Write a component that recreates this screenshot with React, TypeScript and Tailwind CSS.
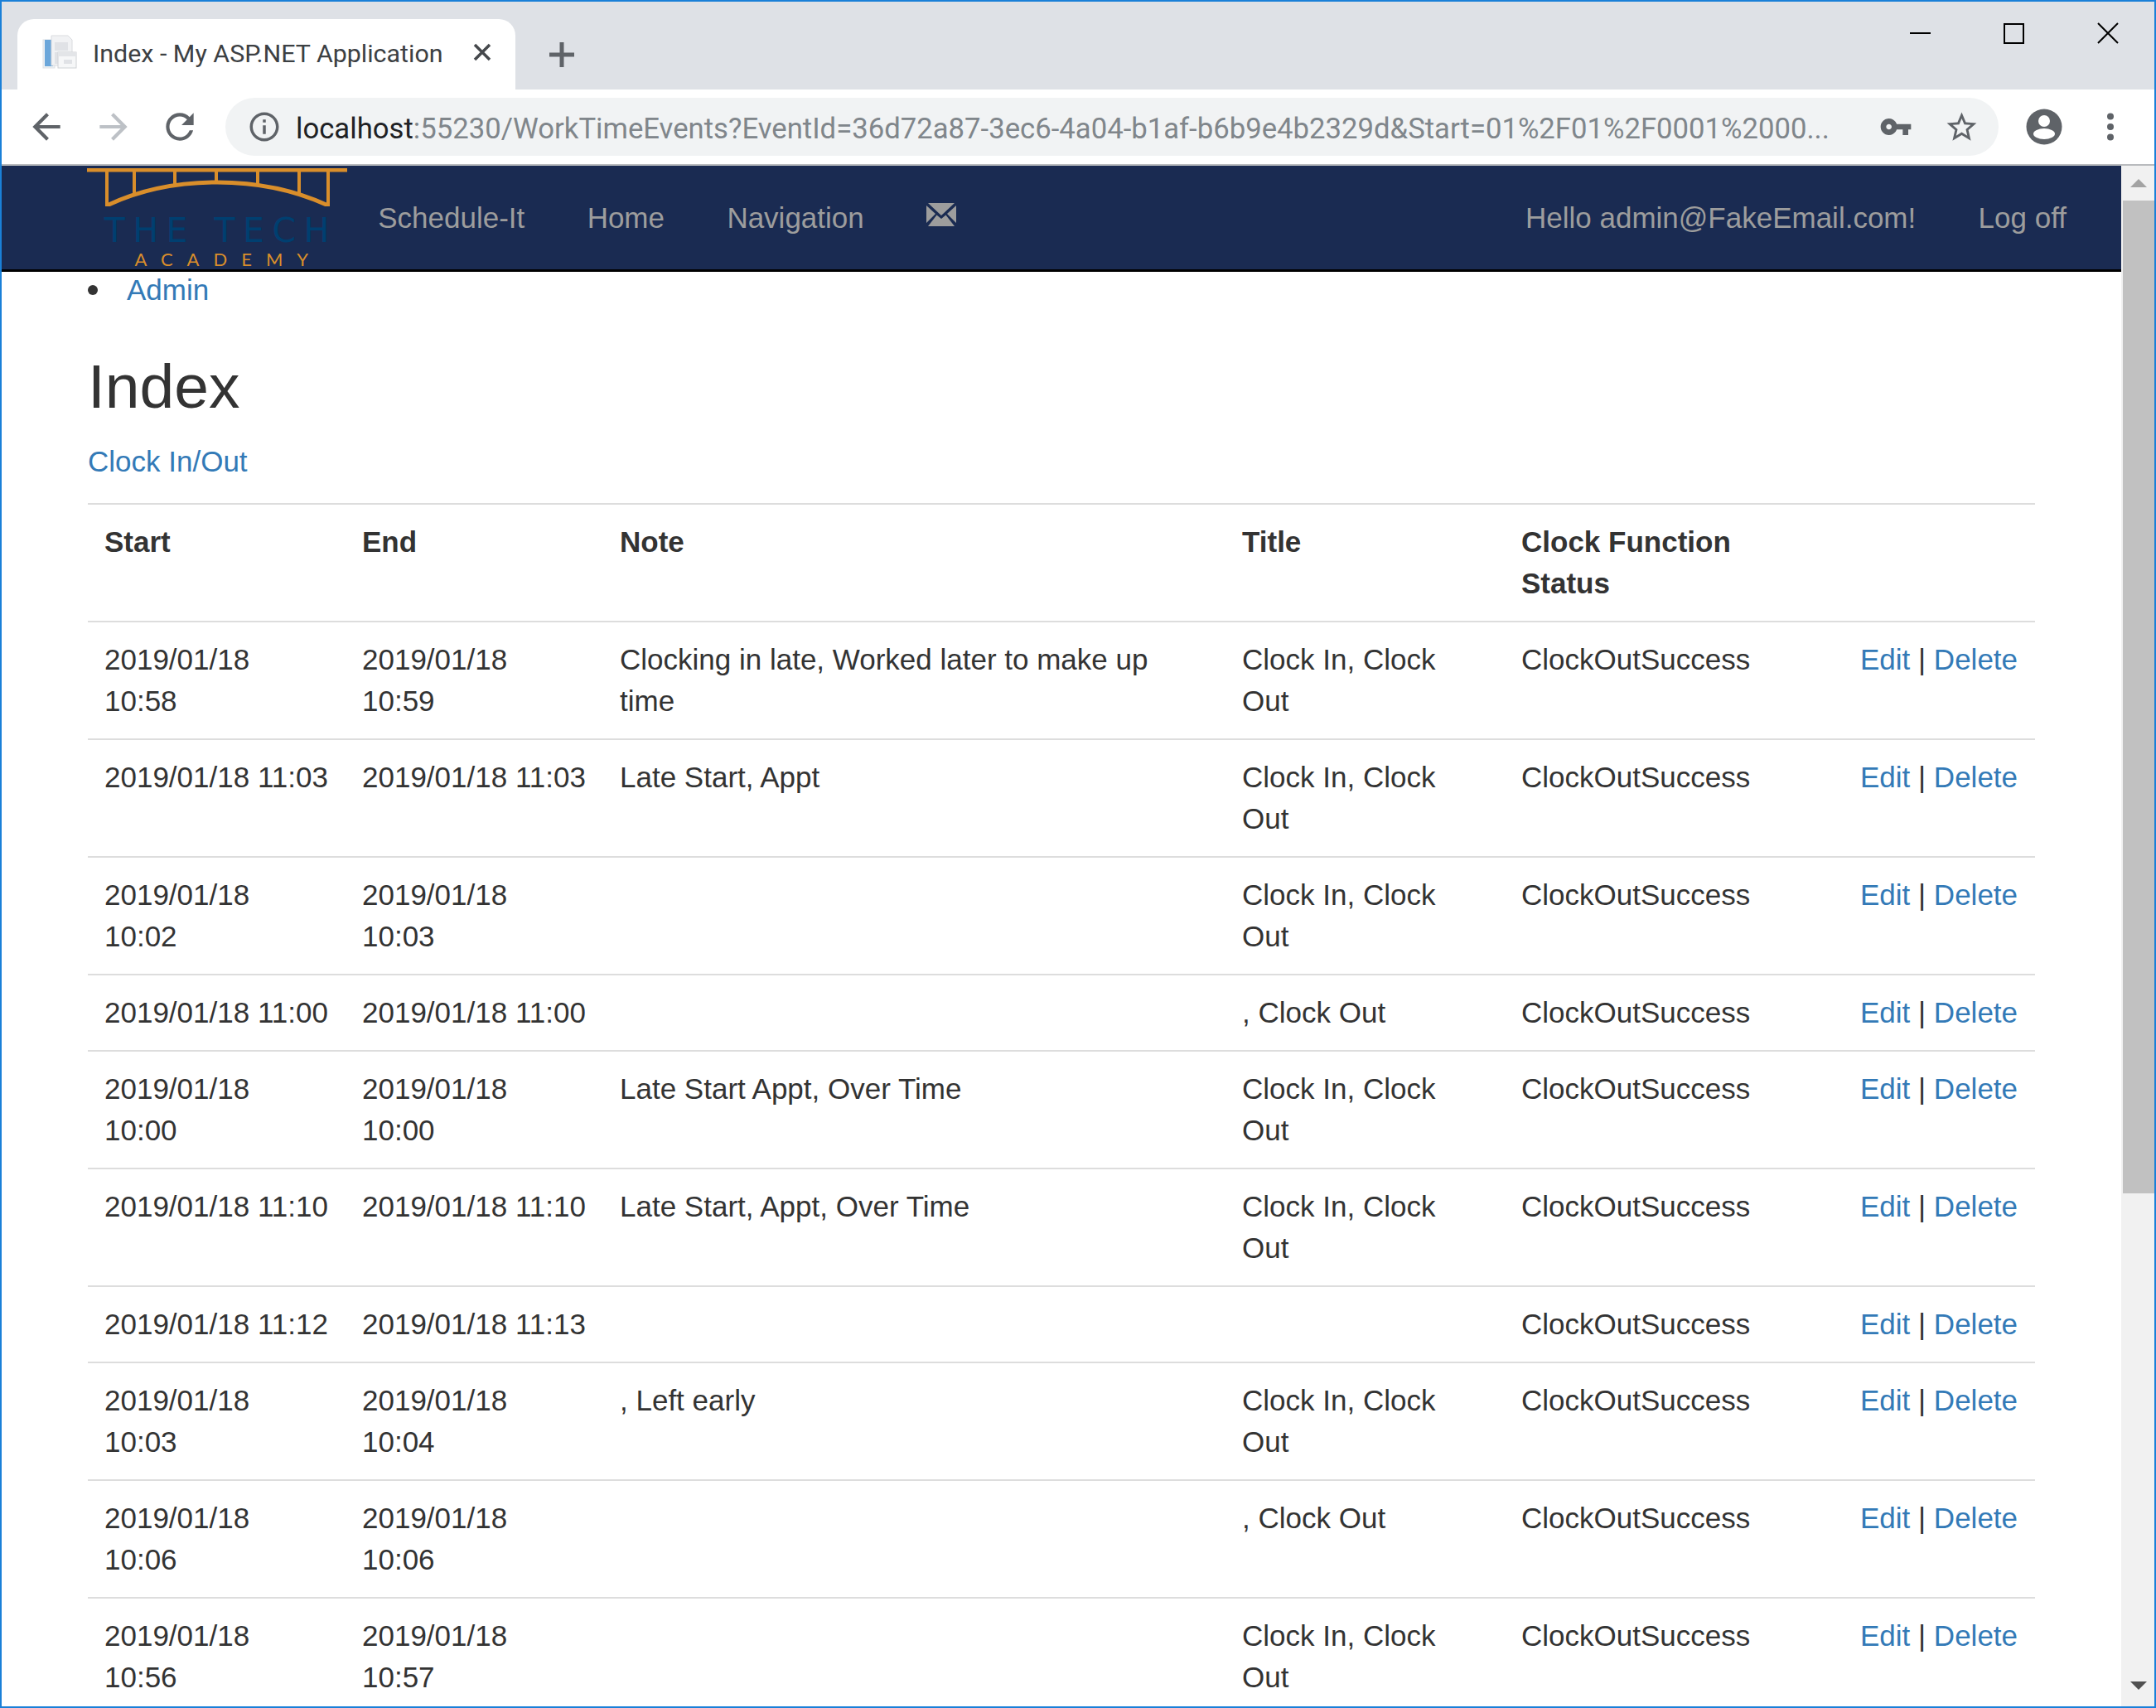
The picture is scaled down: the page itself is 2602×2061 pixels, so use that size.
import React from 'react';

const rows = [
  { start: '2019/01/18 10:58', end: '2019/01/18 10:59', note: 'Clocking in late, Worked later to make up time', title: 'Clock In, Clock Out' },
  { start: '2019/01/18 11:03', end: '2019/01/18 11:03', note: 'Late Start, Appt', title: 'Clock In, Clock Out' },
  { start: '2019/01/18 10:02', end: '2019/01/18 10:03', note: '', title: 'Clock In, Clock Out' },
  { start: '2019/01/18 11:00', end: '2019/01/18 11:00', note: '', title: ', Clock Out' },
  { start: '2019/01/18 10:00', end: '2019/01/18 10:00', note: 'Late Start Appt, Over Time', title: 'Clock In, Clock Out' },
  { start: '2019/01/18 11:10', end: '2019/01/18 11:10', note: 'Late Start, Appt, Over Time', title: 'Clock In, Clock Out' },
  { start: '2019/01/18 11:12', end: '2019/01/18 11:13', note: '', title: '' },
  { start: '2019/01/18 10:03', end: '2019/01/18 10:04', note: ', Left early', title: 'Clock In, Clock Out' },
  { start: '2019/01/18 10:06', end: '2019/01/18 10:06', note: '', title: ', Clock Out' },
  { start: '2019/01/18 10:56', end: '2019/01/18 10:57', note: '', title: 'Clock In, Clock Out' },
];

function BrowserChrome() {
  return (
    <>
      <div className="flex h-[106px] shrink-0 items-end bg-[#dee1e6]">
        <div className="ml-[19px] flex h-[85px] w-[601px] items-center rounded-t-[20px] bg-white pb-[6px] pl-[30px]">
          <svg width="42" height="42" viewBox="0 0 42 42" className="shrink-0">
            <rect x="1" y="6" width="14" height="34" fill="#eef1f4" stroke="#dfe2e6" />
            <rect x="3" y="6" width="10" height="32" fill="#6ba6da" />
            <path d="M11 1h20l5 5v31H11z" fill="#f1f2f4" stroke="#d9dbdf" />
            <rect x="15" y="9" width="16" height="10" fill="#e0e2e6" />
            <rect x="15" y="21" width="5" height="14" fill="#e0e2e6" />
            <rect x="19" y="21" width="22" height="19" fill="#f6f7f8" stroke="#cfd2d6" />
            <rect x="19" y="21" width="22" height="5" fill="#e3e5e8" />
            <rect x="26" y="30" width="10" height="5" fill="#e0e2e6" />
          </svg>
          <span className="ml-[19px] mt-[5px] w-[421px] shrink-0 whitespace-nowrap font-['Roboto',sans-serif] text-[30.4px] text-[#3c4043]">
            Index - My ASP.NET Application
          </span>
          <svg width="24" height="24" viewBox="0 0 24 24" className="ml-[37px] shrink-0" fill="none" stroke="#45484c" strokeWidth="3.5">
            <path d="M3 3l18 18M21 3L3 21" />
          </svg>
        </div>
        <svg width="32" height="32" viewBox="0 0 32 32" className="mb-[26px] ml-[40px] shrink-0" fill="none" stroke="#5f6368" strokeWidth="5">
          <path d="M16 1v30M1 16h30" />
        </svg>
        <div className="flex-1" />
        <div className="mt-[25px] flex items-center self-start">
          <div className="mr-[88px] h-[2px] w-[25px] bg-black" />
          <div className="mr-[88px] h-[25px] w-[25px] border-2 border-black" />
          <svg width="26" height="26" viewBox="0 0 26 26" className="mr-[43px]" fill="none" stroke="#000" strokeWidth="2">
            <path d="M1 1l24 24M25 1L1 25" />
          </svg>
        </div>
      </div>
      <div className="flex h-[92px] shrink-0 items-center border-b-2 border-[#b9bbbe] bg-white">
        <svg width="50" height="50" viewBox="0 0 24 24" className="ml-[29px] shrink-0" fill="#5f6368">
          <path d="M20 11H7.83l5.59-5.59L12 4l-8 8 8 8 1.41-1.41L7.83 13H20v-2z" />
        </svg>
        <svg width="50" height="50" viewBox="0 0 24 24" className="ml-[31px] shrink-0" fill="#bdc1c6">
          <path d="M12 4l-1.41 1.41L16.17 11H4v2h12.17l-5.58 5.59L12 20l8-8z" />
        </svg>
        <svg width="50" height="50" viewBox="0 0 24 24" className="ml-[30px] shrink-0" fill="#5f6368">
          <path d="M17.65 6.35C16.2 4.9 14.21 4 12 4c-4.42 0-7.99 3.58-7.99 8s3.57 8 7.99 8c3.73 0 6.84-2.55 7.73-6h-2.08c-.82 2.33-3.04 4-5.65 4-3.31 0-6-2.69-6-6s2.69-6 6-6c1.66 0 3.14.69 4.22 1.78L13 11h7V4l-2.35 2.35z" />
        </svg>
        <div className="ml-[30px] flex h-[70px] w-[2140px] shrink-0 items-center rounded-full bg-[#f1f3f4] pl-[26px]">
          <svg width="42" height="42" viewBox="0 0 24 24" className="shrink-0" fill="#5f6368">
            <path d="M11 7h2v2h-2zm0 4h2v6h-2zm1-9C6.48 2 2 6.48 2 12s4.48 10 10 10 10-4.48 10-10S17.52 2 12 2zm0 18c-4.41 0-8-3.59-8-8s3.59-8 8-8 8 3.59 8 8-3.59 8-8 8z" />
          </svg>
          <span className="ml-[17px] mt-[3px] w-[1851px] shrink-0 whitespace-nowrap font-['Roboto',sans-serif] text-[34.7px] text-[#80868b]">
            <span className="text-[#202124]">localhost</span>:55230/WorkTimeEvents?EventId=36d72a87-3ec6-4a04-b1af-b6b9e4b2329d&amp;Start=01%2F01%2F0001%2000...
          </span>
          <svg width="40" height="40" viewBox="0 0 24 24" className="ml-[60px] shrink-0" fill="#5f6368">
            <path d="M12.65 10C11.83 7.67 9.61 6 7 6c-3.31 0-6 2.69-6 6s2.69 6 6 6c2.61 0 4.83-1.67 5.65-4H17v4h4v-4h2v-4H12.65zM7 14c-1.1 0-2-.9-2-2s.9-2 2-2 2 .9 2 2-.9 2-2 2z" />
          </svg>
          <svg width="43" height="43" viewBox="0 0 24 24" className="ml-[38px] shrink-0" fill="#5f6368">
            <path d="M22 9.24l-7.19-.62L12 2 9.19 8.63 2 9.24l5.46 4.73L5.82 21 12 17.27 18.18 21l-1.63-7.03L22 9.24zM12 15.4l-3.76 2.27 1-4.28-3.32-2.88 4.38-.38L12 6.1l1.71 4.04 4.38.38-3.32 2.88 1 4.28L12 15.4z" />
          </svg>
        </div>
        <svg width="44" height="44" viewBox="0 0 44 44" className="ml-[33px] shrink-0">
          <circle cx="22" cy="22" r="21.5" fill="#5f6368" />
          <circle cx="22" cy="15" r="7" fill="#fff" />
          <ellipse cx="22" cy="30.5" rx="13" ry="6.5" fill="#fff" />
        </svg>
        <svg width="10" height="34" viewBox="0 0 10 34" className="ml-[53px] shrink-0" fill="#5f6368">
          <circle cx="5" cy="4.5" r="4" />
          <circle cx="5" cy="17" r="4" />
          <circle cx="5" cy="29.5" r="4" />
        </svg>
      </div>
    </>
  );
}

function Logo() {
  return (
    <div className="flex h-full w-[416.5px] shrink-0 flex-col items-center pl-[104px] pt-[3px]">
      <svg width="314" height="46" viewBox="0 0 314 46" className="shrink-0" fill="none" stroke="#d98e2b" strokeWidth="4">
        <path d="M0 2h314" strokeWidth="5" />
        <path d="M24 2v44M57 2v28M106 2v17M156 2v15M206 2v17M256 2v28M291 2v44" />
        <path d="M24 45c38-18 82-28 133-28s95 10 134 28" strokeWidth="5" />
      </svg>
      <span className="ml-[8px] mt-[9px] whitespace-nowrap font-['DejaVu_Sans',sans-serif] text-[41px] leading-[41px] tracking-[9.5px] text-[#003f70]">
        THE TECH
      </span>
      <span className="ml-[27px] mt-[2px] whitespace-nowrap font-['Lato',sans-serif] text-[22px] leading-[24px] tracking-[17px] text-[#d98e2b]">
        ACADEMY
      </span>
    </div>
  );
}

function Navbar() {
  const link = 'px-[37.7px] whitespace-nowrap text-[#9d9d9d]';
  return (
    <div className="flex h-[128px] shrink-0 items-start border-b-[3px] border-black bg-[#1a2b52] text-[35px] leading-[50px]">
      <Logo />
      <div className="flex flex-1 items-center pt-[38px]">
        <span className={link}>Schedule-It</span>
        <span className={link}>Home</span>
        <span className={link}>Navigation</span>
        <span className={link}>
          <svg width="36" height="28" viewBox="0 0 36 28" fill="#9d9d9d" className="-translate-y-[4px]">
            <path d="M0 3l11 10L0 24zM36 3v21L25 13zM2 0h32L18 15zM12.5 14.5L18 19l5.5-4.5L34 28H2z" />
          </svg>
        </span>
        <div className="flex-1" />
        <span className={link}>Hello admin@FakeEmail.com!</span>
        <span className={`${link} mr-[28.3px]`}>Log off</span>
      </div>
    </div>
  );
}

function Scrollbar() {
  return (
    <div className="flex w-[40px] shrink-0 flex-col items-end bg-[#f1f1f1]">
      <div className="flex h-[42px] w-full shrink-0 items-center justify-center pl-[2px]">
        <div className="h-0 w-0 border-x-[10px] border-b-[10px] border-x-transparent border-b-[#a3a3a3]" />
      </div>
      <div className="h-[1198px] w-[38px] shrink-0 bg-[#c1c1c1]" />
      <div className="flex-1" />
      <div className="flex h-[30px] w-full shrink-0 items-start justify-center pl-[2px]">
        <div className="h-0 w-0 border-x-[10px] border-t-[10px] border-x-transparent border-t-[#505050]" />
      </div>
    </div>
  );
}

export default function App() {
  const td = 'border-t-2 border-[#dddddd] p-[20px] align-top';
  const th = 'border-t-2 border-[#dddddd] p-[20px] text-left align-top font-bold';
  return (
    <div className="flex h-[2061px] w-[2602px] flex-col overflow-hidden border-2 border-[#1a80d8] bg-white font-['Liberation_Sans',Arial,sans-serif] text-[35px] leading-[50px] text-[#333333]">
      <BrowserChrome />
      <div className="flex min-h-0 flex-1">
        <div className="min-w-0 flex-1 overflow-hidden">
          <Navbar />
          <div className="pl-[104px]">
            <ul className="-mt-[3px]">
              <li className="flex items-center">
                <span className="h-[12px] w-[12px] rounded-full bg-[#333333]" />
                <a className="ml-[35px] text-[#337ab7]">Admin</a>
              </li>
            </ul>
            <h2 className="mt-[50px] text-[75px] font-normal leading-[82px]">Index</h2>
            <p className="mt-[25px]">
              <a className="text-[#337ab7]">Clock In/Out</a>
            </p>
            <table className="mt-[25px] w-[2350px] table-fixed border-collapse">
              <colgroup>
                <col className="w-[311px]" />
                <col className="w-[311px]" />
                <col className="w-[751px]" />
                <col className="w-[337px]" />
                <col className="w-[409px]" />
                <col className="w-[231px]" />
              </colgroup>
              <thead>
                <tr>
                  <th className={th}>Start</th>
                  <th className={th}>End</th>
                  <th className={th}>Note</th>
                  <th className={th}>Title</th>
                  <th className={th}>Clock Function Status</th>
                  <th className={th} />
                </tr>
              </thead>
              <tbody>
                {rows.map((r, i) => (
                  <tr key={i}>
                    <td className={td}>{r.start}</td>
                    <td className={td}>{r.end}</td>
                    <td className={td}>{r.note}</td>
                    <td className={td}>{r.title}</td>
                    <td className={td}>ClockOutSuccess</td>
                    <td className={`${td} whitespace-nowrap`}>
                      <a className="text-[#337ab7]">Edit</a> | <a className="text-[#337ab7]">Delete</a>
                    </td>
                  </tr>
                ))}
              </tbody>
            </table>
          </div>
        </div>
        <Scrollbar />
      </div>
    </div>
  );
}
